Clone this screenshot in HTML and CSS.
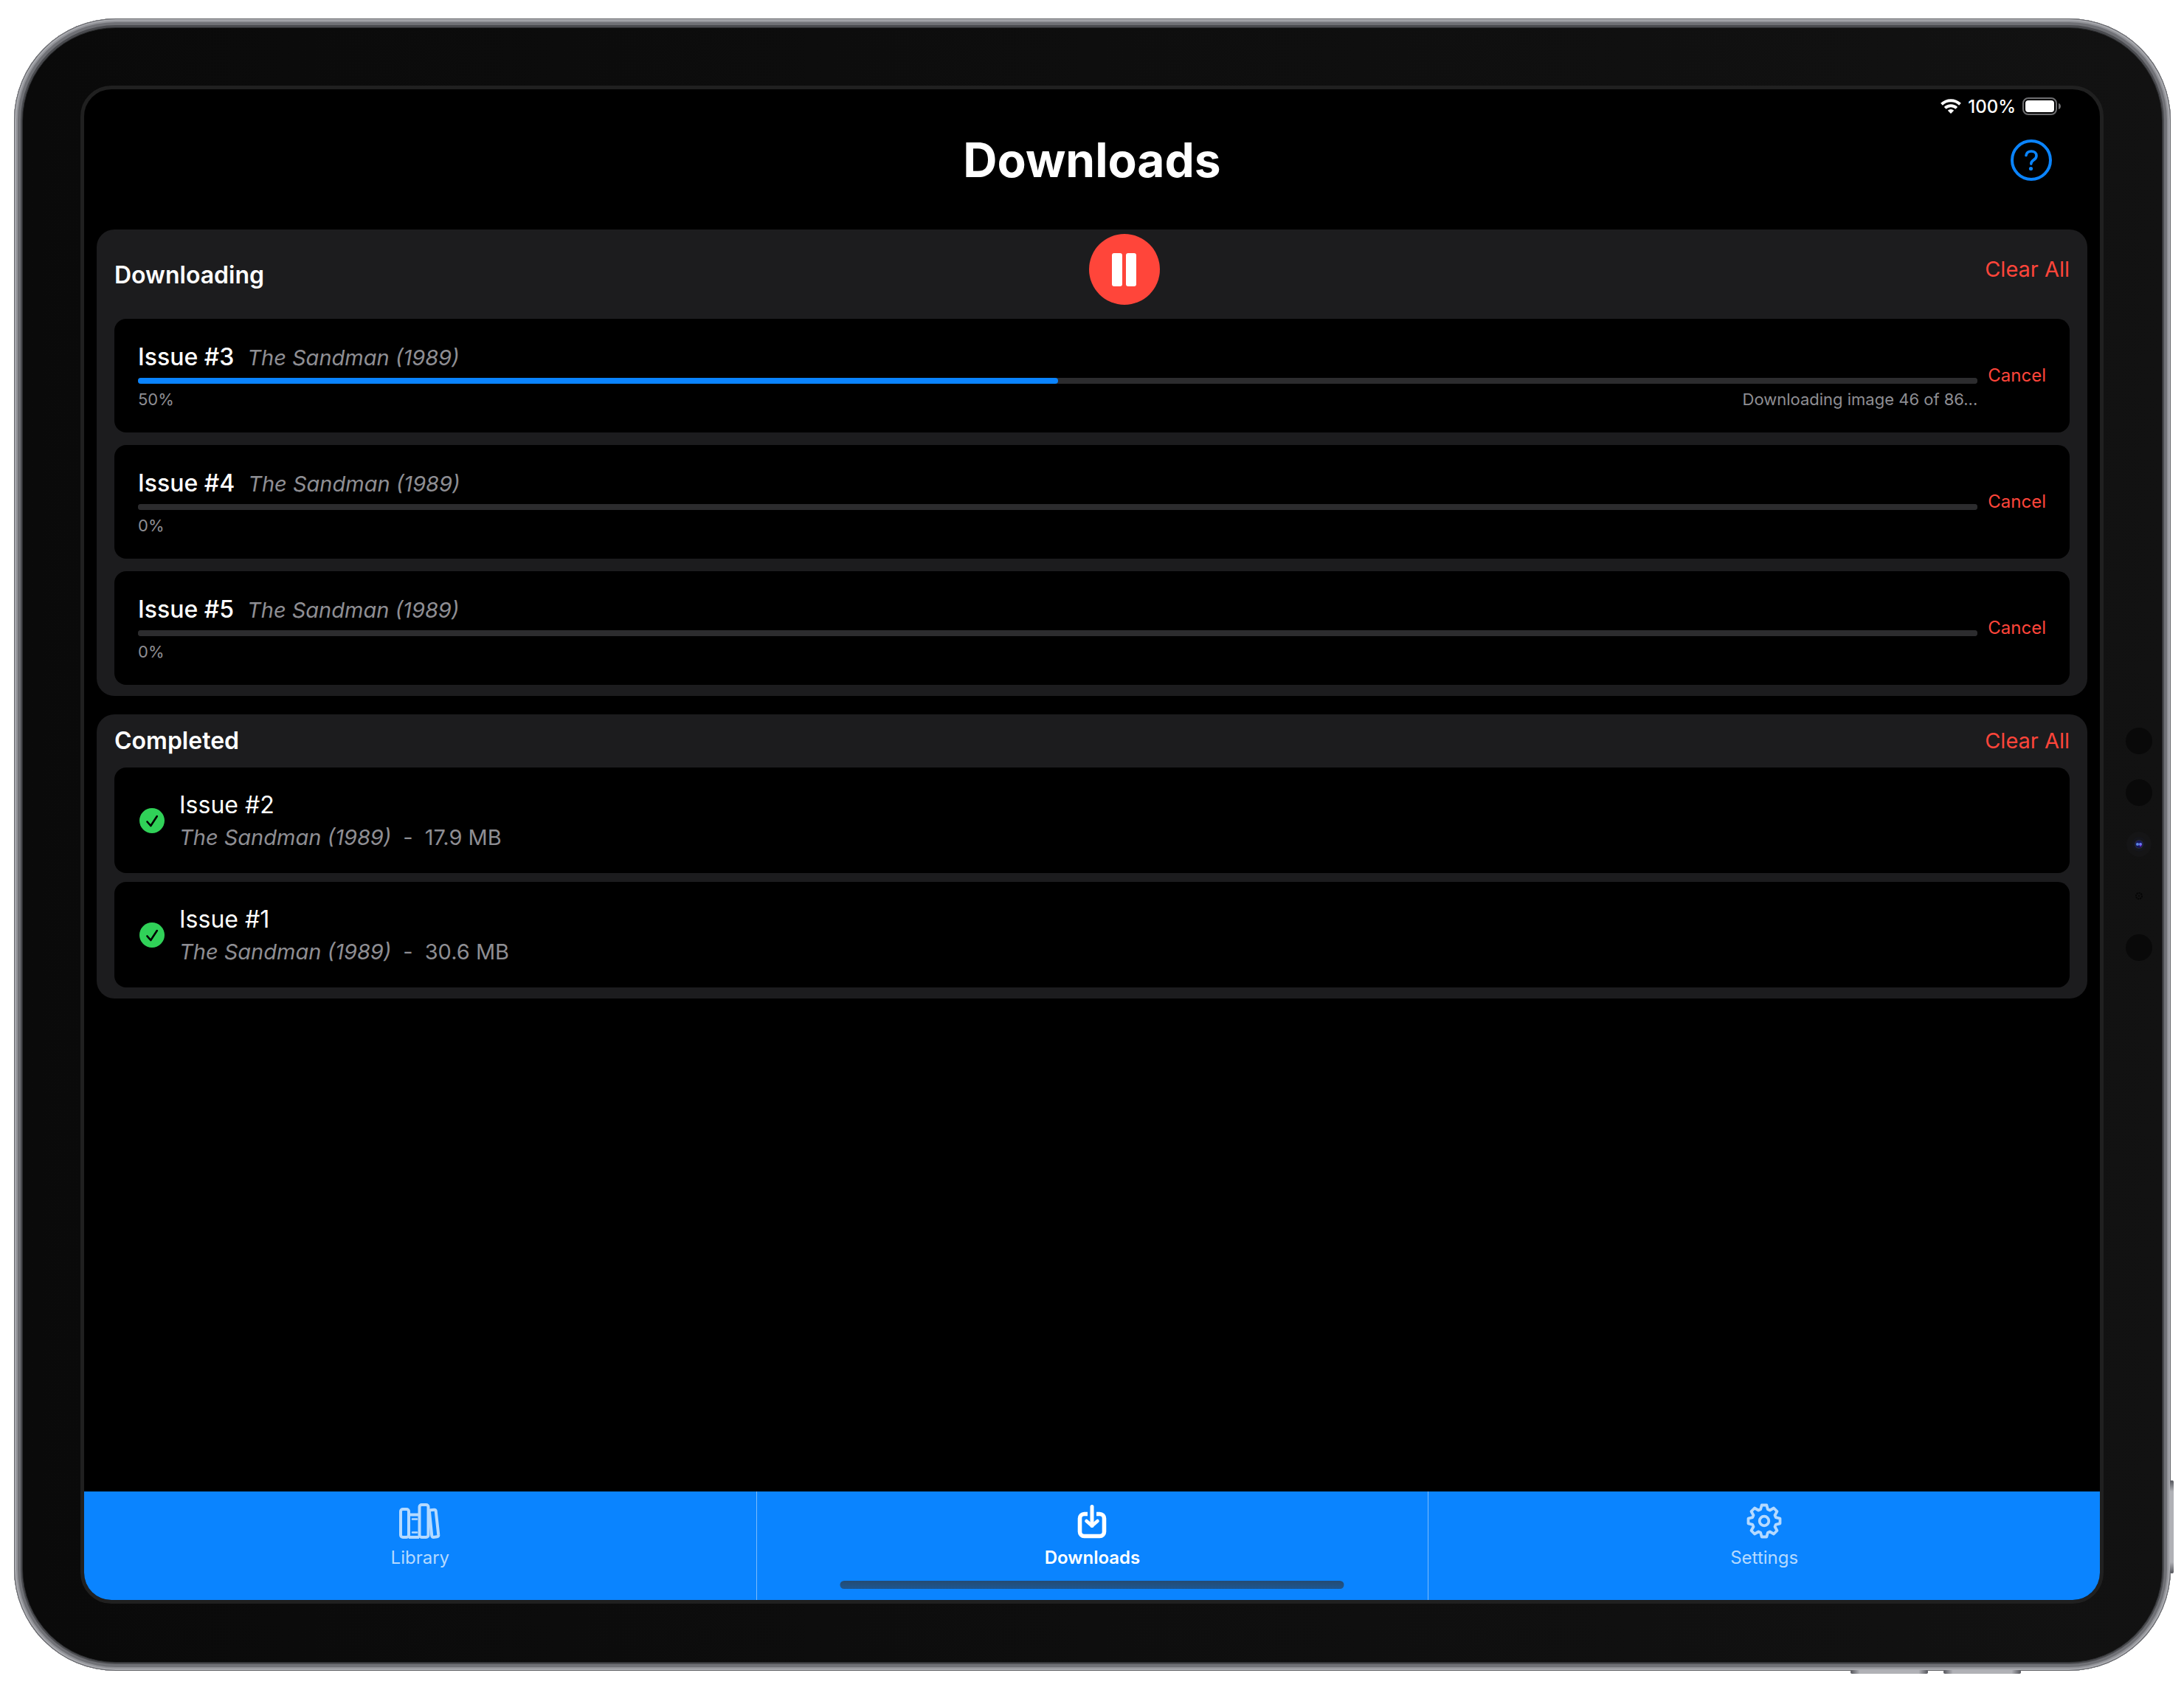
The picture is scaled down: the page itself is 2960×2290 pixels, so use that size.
FILE: index.html
```html
<!DOCTYPE html>
<html lang="en">
<head>
<meta charset="utf-8">
<title>Downloads</title>
<link rel="stylesheet" href="styles.css">
</head>
<body>
<div class="device">
  <span class="key key-top"></span>
  <span class="key key-volume-up"></span>
  <span class="key key-volume-down"></span>
  <div class="glass">
    <div class="sensors" aria-hidden="true">
      <span class="sensor"></span>
      <span class="sensor"></span>
      <svg class="lens" viewBox="0 0 36 36"><circle cx="18" cy="18" r="17" fill="#151516"/><circle cx="18" cy="18" r="10" fill="#15161c"/><circle cx="18" cy="18" r="6" fill="#2a2c38"/><circle cx="18" cy="18" r="5" fill="#15175c"/><circle cx="16" cy="18" r="2" fill="#5a86e0"/><circle cx="20" cy="18" r="2" fill="#6a7af0"/><circle cx="20" cy="20" r="1" fill="#8a2be2"/></svg>
      <svg class="lens" viewBox="0 0 36 36"><circle cx="18" cy="18" r="4" fill="none" stroke="#050505" stroke-width="2" stroke-dasharray="2 1"/><circle cx="18" cy="18" r="1" fill="#050505"/></svg>
      <span class="sensor"></span>
    </div>
    <div class="screen">
      <div class="status">
        <svg class="wifi" viewBox="0 0 28 20" fill="none" stroke="#fff" stroke-width="4"><path d="M1.5 7.2a18 18 0 0 1 25 0"/><path d="M6.2 12.4a11.2 11.2 0 0 1 15.600 0"/><path d="M14 20l-4.200-4.300a6 6 0 0 1 8.400 0z" fill="#fff" stroke="none"/></svg>
        <span>100%</span>
        <svg class="battery" viewBox="0 0 53 24"><rect x="1" y="1" width="45" height="22" rx="7" fill="none" stroke="#6e6e70" stroke-width="2"/><rect x="4" y="4" width="39" height="16" rx="4" fill="#fff"/><path d="M49 8c4 1 4 7 0 8z" fill="#6e6e70"/></svg>
      </div>
      <header class="topbar">
        <h1>Downloads</h1>
        <button class="help" aria-label="Help"><svg viewBox="0 0 56 56" fill="none" stroke="#0a84ff" stroke-linecap="round" stroke-linejoin="round"><circle cx="28" cy="28" r="26" stroke-width="4"/><path d="M21 21.500c.6-3.400 3.300-5.500 7-5.500 4.200 0 7 2.400 7 5.900 0 2.900-1.500 4.500-3.900 6-2.300 1.500-3.300 2.600-3.300 4.900v.3" stroke-width="3.600"/><circle cx="27.500" cy="39.500" r="2.600" fill="#0a84ff" stroke="none"/></svg></button>
      </header>
      <main>
        <section class="panel">
          <div class="panel-head panel-head-active">
            <h2>Downloading</h2>
            <button class="pause" aria-label="Pause"><svg viewBox="0 0 96 96"><circle cx="48" cy="48" r="48" fill="#ff453a"/><rect x="31" y="26" width="14" height="45" rx="3" fill="#fff"/><rect x="50" y="26" width="14" height="45" rx="3" fill="#fff"/></svg></button>
            <button class="clear">Clear All</button>
          </div>
          <ul class="queue">
            <li class="job">
              <div class="job-body">
                <div class="job-title"><h3>Issue #3</h3><i>The Sandman (1989)</i></div>
                <progress value="50" max="100" aria-label="Issue #3"></progress>
                <div class="job-note"><span>50%</span><span>Downloading image 46 of 86...</span></div>
              </div>
              <button class="cancel">Cancel</button>
            </li>
            <li class="job">
              <div class="job-body">
                <div class="job-title"><h3>Issue #4</h3><i>The Sandman (1989)</i></div>
                <progress value="0" max="100" aria-label="Issue #4"></progress>
                <div class="job-note"><span>0%</span></div>
              </div>
              <button class="cancel">Cancel</button>
            </li>
            <li class="job">
              <div class="job-body">
                <div class="job-title"><h3>Issue #5</h3><i>The Sandman (1989)</i></div>
                <progress value="0" max="100" aria-label="Issue #5"></progress>
                <div class="job-note"><span>0%</span></div>
              </div>
              <button class="cancel">Cancel</button>
            </li>
          </ul>
        </section>
        <section class="panel">
          <div class="panel-head">
            <h2>Completed</h2>
            <button class="clear">Clear All</button>
          </div>
          <ul class="finished">
            <li class="done">
              <svg class="tick" viewBox="0 0 34 34"><circle cx="17" cy="17" r="17" fill="#30d158"/><path d="M10.500 18.500l4.800 5.500L23.800 11" fill="none" stroke="#000" stroke-width="2.600" stroke-linecap="round" stroke-linejoin="round"/></svg>
              <div><h3>Issue #2</h3><p><i>The Sandman (1989)</i><span>-</span><span>17.9 MB</span></p></div>
            </li>
            <li class="done">
              <svg class="tick" viewBox="0 0 34 34"><circle cx="17" cy="17" r="17" fill="#30d158"/><path d="M10.500 18.500l4.800 5.500L23.800 11" fill="none" stroke="#000" stroke-width="2.600" stroke-linecap="round" stroke-linejoin="round"/></svg>
              <div><h3>Issue #1</h3><p><i>The Sandman (1989)</i><span>-</span><span>30.6 MB</span></p></div>
            </li>
          </ul>
        </section>
      </main>
      <nav class="tabs">
        <a href="#library"><svg viewBox="0 0 56 48" fill="none" stroke="currentColor" stroke-width="4" stroke-linejoin="round"><rect x="2" y="8" width="11" height="38" rx="3"/><path d="M13 15.500h14M13 46h14"/><path d="M18 21.500h6M18 39.500h6" stroke-width="2.600" stroke-linecap="round"/><rect x="27.500" y="2" width="12" height="44" rx="3"/><path d="M42.500 9.200l5-.5a2 2 0 0 1 2.200 1.800l3.600 32.500a2 2 0 0 1-1.700 2.300l-5 .6a2 2 0 0 1-2.300-1.700l-3.300-32.500a2 2 0 0 1 1.500-2.500z"/></svg>Library</a>
        <a href="#downloads" class="current" aria-current="page"><svg viewBox="0 0 56 48" fill="none" stroke="currentColor" stroke-width="5.600"><path d="M22 14.500h-4.500a6 6 0 0 0-6 6v18a6 6 0 0 0 6 6h21a6 6 0 0 0 6-6v-18a6 6 0 0 0-6-6H34"/><path d="M28 4.500v26" stroke-width="5" stroke-linecap="round"/><path d="M20.500 24l7.500 6.500 7.500-6.500" stroke-width="4.600" stroke-linecap="round" stroke-linejoin="round"/></svg>Downloads</a>
        <a href="#settings"><svg viewBox="0 0 56 48" fill="none" stroke="currentColor" stroke-width="3.800" stroke-linejoin="round"><path d="M24.700 2.500h6.600l1.600 5.800 2.800 1.200 5.300-3 4.500 4.500-3 5.300 1.200 2.800 5.800 1.600v6.600l-5.800 1.600-1.200 2.800 3 5.300-4.500 4.500-5.300-3-2.800 1.200-1.600 5.800h-6.600l-1.600-5.800-2.800-1.200-5.300 3-4.500-4.500 3-5.300-1.200-2.800-5.800-1.600v-6.600l5.800-1.600 1.200-2.800-3-5.300 4.500-4.500 5.300 3 2.800-1.200z"/><circle cx="28" cy="24" r="6.300"/></svg>Settings</a>
        <span class="home-bar"></span>
      </nav>
    </div>
  </div>
</div>
</body>
</html>
```
FILE: styles.css
```css
* { box-sizing: border-box; }

body {
  display: flex;
  min-height: 100vh;
  margin: 0;
  padding: 25px 18px 26px 19px;
  background: #fff;
  color: #fff;
  font-family: Inter, "Liberation Sans", sans-serif;
}

h1, h2, h3, p, ul { margin: 0; padding: 0; }
li { list-style: none; }
svg { display: block; }

button {
  margin: 0;
  padding: 0;
  border: 0;
  background: none;
  color: #ff453a;
  font-family: inherit;
}

/* Hardware */
.device {
  position: relative;
  display: flex;
  flex: 1;
  padding: 12px 11px 11px;
  border-radius: 138px;
  background: #4a4b4f;
  box-shadow:
    inset 0 0 0 1px #66676b,
    inset 0 0 0 3px #a9aaaf,
    inset 0 0 0 5px #929398,
    inset 0 0 0 9px #707176;
}

.glass {
  position: relative;
  display: flex;
  flex: 1;
  padding: 78px 79px 79px 78px;
  border: 1px solid #2a2b2d;
  border-radius: 127px;
  background: linear-gradient(90deg, #0a0a0a, #121212);
}

.key {
  position: absolute;
  background: linear-gradient(90deg, #55565c, #b0b1b6 12%, #b0b1b6 88%, #55565c);
  border-radius: 2px;
}
.key-top {
  right: -4px;
  bottom: 132px;
  width: 5px;
  height: 126px;
  background: linear-gradient(#55565c, #b0b1b6 12%, #b0b1b6 88%, #55565c);
}
.key-volume-up, .key-volume-down { bottom: -4px; width: 105px; height: 5px; }
.key-volume-up { right: 203px; }
.key-volume-down { right: 329px; }

.sensors {
  position: absolute;
  top: 948px;
  right: 13px;
  display: grid;
  gap: 34px;
}
.sensor { width: 36px; height: 36px; border-radius: 50%; background: #090909; }
.lens { width: 36px; height: 36px; }

/* Screen */
.screen {
  display: flex;
  flex: 1;
  flex-direction: column;
  overflow: hidden;
  border: 5px solid #202020;
  border-radius: 42px;
  background: #000;
}

.status {
  display: flex;
  align-items: center;
  justify-content: flex-end;
  height: 46px;
  padding-right: 52px;
  gap: 9px;
  font-size: 24px;
  font-weight: 500;
}
.wifi { width: 28px; height: 20px; }
.battery { width: 53px; height: 24px; }

.topbar {
  display: grid;
  grid-template-columns: 1fr auto 1fr;
  align-items: center;
  height: 100px;
  padding: 0 65px;
}
.topbar h1 { grid-column: 2; font-size: 64px; font-weight: 700; line-height: 80px; }
.help { width: 56px; height: 56px; justify-self: end; }

main {
  display: grid;
  flex: 1;
  align-content: start;
  gap: 25px;
  padding: 44px 17px;
}

.panel {
  padding: 0 24px 15px;
  border-radius: 24px;
  background: #1c1c1e;
}

.panel-head {
  display: flex;
  align-items: center;
  justify-content: space-between;
  height: 72px;
}
.panel-head-active { height: 121px; padding-bottom: 13px; }
.panel-head-active h2 { padding-top: 16px; }
h2 { font-size: 32px; font-weight: 600; line-height: 40px; }
.pause { width: 96px; height: 96px; }
.clear { font-size: 29px; line-height: 40px; }

.queue { display: grid; gap: 17px; }
.finished { display: grid; gap: 12px; }
.job, .done {
  display: flex;
  align-items: center;
  border-radius: 16px;
  background: #000;
}

.job { gap: 14px; padding: 32px; }
.job-body { display: grid; flex: 1; gap: 8px; }
.job-title { display: flex; align-items: baseline; gap: 18px; height: 40px; line-height: 40px; }
.job h3 { font-size: 32px; font-weight: 500; }
i { color: #8e8e93; font-size: 29px; }

progress {
  display: block;
  width: 100%;
  height: 8px;
  border: 0;
  border-radius: 4px;
  background: #2c2c2e;
  appearance: none;
}
progress::-webkit-progress-bar { border-radius: 4px; background: #2c2c2e; }
progress::-webkit-progress-value { border-radius: 4px; background: #0a84ff; }

.job-note {
  display: flex;
  justify-content: space-between;
  color: #8e8e93;
  font-size: 22px;
  line-height: 26px;
}
.cancel { font-size: 24px; line-height: 32px; }

.done { gap: 20px; padding: 28px 34px 27px; }
.done h3 { font-size: 32px; font-weight: 400; line-height: 46px; }
.done p { display: flex; gap: 16px; color: #8e8e93; font-size: 29px; line-height: 42px; }
.tick { width: 34px; height: 34px; }

/* Tab bar */
.tabs {
  position: relative;
  display: grid;
  grid-template-columns: repeat(3, 1fr);
  height: 147px;
  background: #0a84ff;
}
.tabs a {
  display: flex;
  flex-direction: column;
  align-items: center;
  gap: 12px;
  padding-top: 16px;
  color: #b5daff;
  font-size: 24px;
  line-height: 28px;
  text-decoration: none;
}
.tabs a + a { border-left: 1px solid #7cbcfb; }
.tabs .current { color: #fff; font-weight: 600; }
.tabs svg { width: 56px; height: 48px; }

.home-bar {
  position: absolute;
  bottom: 15px;
  left: 50%;
  width: 25%;
  height: 11px;
  border-radius: 6px;
  background: linear-gradient(#254b72, #1d5690);
  transform: translateX(-50%);
}
```
